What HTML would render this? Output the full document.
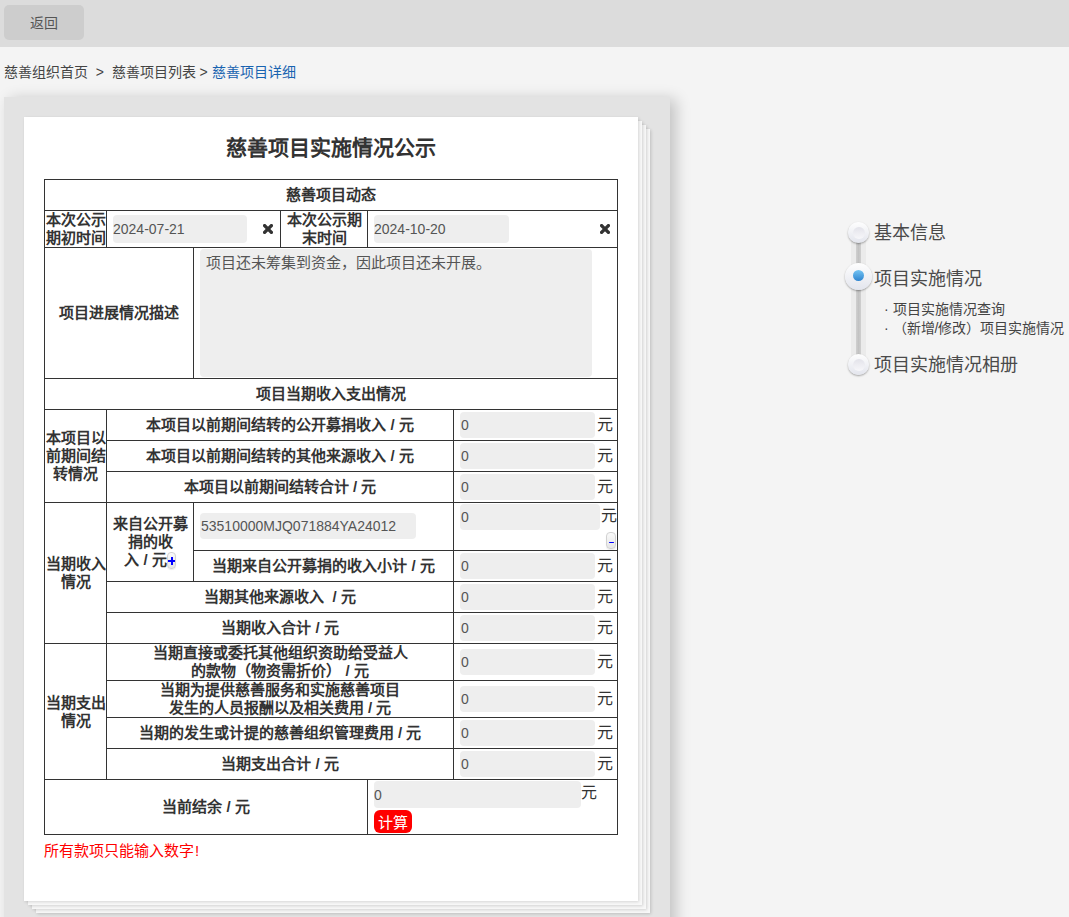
<!DOCTYPE html>
<html lang="zh-CN"><head><meta charset="utf-8">
<style>
html,body{margin:0;padding:0;}
body{width:1069px;height:917px;overflow:hidden;background:#f4f4f4;position:relative;font-family:"Liberation Sans",sans-serif;color:#333;}
.a{position:absolute;}
#topbar{left:0;top:0;width:1069px;height:47px;background:#dcdcdc;}
#back{left:4px;top:5px;width:80px;height:35px;background:#cdcdcd;border-radius:5px;font-size:14px;color:#555;line-height:37px;text-align:center;}
#crumb{left:4px;top:62px;font-size:14px;line-height:20px;color:#444;white-space:nowrap;}
#crumb .cur{color:#1863b0;}
#box{left:4px;top:97px;width:666px;height:840px;background:#e3e3e3;box-shadow:6px 2px 14px rgba(0,0,0,0.2);}
.sheet{width:614px;height:784px;background:#f8f8f8;box-shadow:1px 1px 3px rgba(0,0,0,0.16);}
#paper{left:24px;top:117px;width:614px;height:784px;background:#fff;box-shadow:1px 1px 3px rgba(0,0,0,0.14);}
#title{left:24px;top:134px;width:614px;text-align:center;font-size:21px;font-weight:bold;line-height:28px;color:#333;}
.h{position:absolute;height:1px;background:#333;}
.v{position:absolute;width:1px;background:#333;}
.c{position:absolute;display:flex;align-items:center;justify-content:center;text-align:center;font-size:15px;font-weight:bold;line-height:18px;color:#333;}
.inp{position:absolute;background:#eee;border-radius:4px;font-size:14px;color:#555;line-height:26px;padding-left:1px;box-sizing:border-box;}
.yuan{position:absolute;font-size:16px;line-height:18px;color:#333;}
.x{position:absolute;width:10px;height:10px;}
.sbtn{background:linear-gradient(#fafafa,#e6e6e6);border:1px solid #d2d2d2;border-radius:4px;box-sizing:border-box;box-shadow:0 1px 1px rgba(0,0,0,0.08);}
.plh{position:absolute;left:0.5px;top:7px;width:7px;height:2px;background:#00f;}
.plv{position:absolute;left:3px;top:4px;width:2px;height:8px;background:#00f;}
.dot{border-radius:50%;background:linear-gradient(#fefefe,#e3e5ed);box-shadow:0 1px 2px rgba(0,0,0,0.35);}
.dot i,.dot b{position:absolute;border-radius:50%;}
.dot i{background:linear-gradient(#e3e3ea,#f7f7fa);}
.dot b{background:linear-gradient(#74c4f3,#2e84d0);}
.nav{font-size:18px;line-height:24px;color:#4a4a4a;white-space:nowrap;}
.sub{font-size:14px;line-height:18px;color:#444;white-space:nowrap;}
#note{left:44px;top:841px;font-size:15px;line-height:20px;color:#f00;white-space:nowrap;}
</style></head><body>
<div id="topbar" class="a"></div>
<div id="back" class="a">返回</div>
<div id="crumb" class="a">慈善组织首页 &nbsp;&gt;&nbsp; 慈善项目列表 &gt; <span class="cur">慈善项目详细</span></div>

<div id="box" class="a"></div>
<div class="a sheet" style="left:36px;top:129px"></div>
<div class="a sheet" style="left:32px;top:125px"></div>
<div class="a sheet" style="left:28px;top:121px"></div>
<div id="paper" class="a"></div>
<div id="title" class="a">慈善项目实施情况公示</div>

<!-- horizontal lines -->
<div class="h" style="left:44px;top:179px;width:574px"></div>
<div class="h" style="left:44px;top:210px;width:574px"></div>
<div class="h" style="left:44px;top:247px;width:574px"></div>
<div class="h" style="left:44px;top:378px;width:574px"></div>
<div class="h" style="left:44px;top:409px;width:574px"></div>
<div class="h" style="left:106px;top:440px;width:512px"></div>
<div class="h" style="left:106px;top:471px;width:512px"></div>
<div class="h" style="left:44px;top:502px;width:574px"></div>
<div class="h" style="left:193px;top:550px;width:425px"></div>
<div class="h" style="left:106px;top:581px;width:512px"></div>
<div class="h" style="left:106px;top:612px;width:512px"></div>
<div class="h" style="left:44px;top:643px;width:574px"></div>
<div class="h" style="left:106px;top:680px;width:512px"></div>
<div class="h" style="left:106px;top:717px;width:512px"></div>
<div class="h" style="left:106px;top:748px;width:512px"></div>
<div class="h" style="left:44px;top:779px;width:574px"></div>
<div class="h" style="left:44px;top:834px;width:574px"></div>
<!-- vertical lines -->
<div class="v" style="left:44px;top:179px;height:656px"></div>
<div class="v" style="left:617px;top:179px;height:656px"></div>
<div class="v" style="left:106px;top:210px;height:37px"></div>
<div class="v" style="left:280px;top:210px;height:37px"></div>
<div class="v" style="left:367px;top:210px;height:37px"></div>
<div class="v" style="left:193px;top:247px;height:131px"></div>
<div class="v" style="left:106px;top:409px;height:370px"></div>
<div class="v" style="left:453px;top:409px;height:370px"></div>
<div class="v" style="left:193px;top:502px;height:79px"></div>
<div class="v" style="left:367px;top:779px;height:55px"></div>

<!-- cells -->
<div class="c" style="left:45px;top:180px;width:572px;height:30px">慈善项目动态</div>
<div class="c" style="left:45px;top:211px;width:61px;height:36px">本次公示<br>期初时间</div>
<div class="inp" style="left:113px;top:215px;width:134px;height:28px;line-height:28px;padding-left:0">2024-07-21</div>
<svg class="x" style="left:263px;top:224px" viewBox="0 0 10 10"><path d="M1.6 1.6L8.4 8.4M8.4 1.6L1.6 8.4" stroke="#333" stroke-width="3.4" stroke-linecap="round"/></svg>
<div class="c" style="left:281px;top:211px;width:86px;height:36px">本次公示期<br>末时间</div>
<div class="inp" style="left:374px;top:215px;width:135px;height:28px;line-height:28px;padding-left:0">2024-10-20</div>
<svg class="x" style="left:600px;top:224px" viewBox="0 0 10 10"><path d="M1.6 1.6L8.4 8.4M8.4 1.6L1.6 8.4" stroke="#333" stroke-width="3.4" stroke-linecap="round"/></svg>

<div class="c" style="left:45px;top:248px;width:148px;height:130px">项目进展情况描述</div>
<div class="inp" style="left:200px;top:249px;width:392px;height:128px;font-size:15px;line-height:28px;color:#555;text-indent:5px">项目还未筹集到资金，因此项目还未开展。</div>

<div class="c" style="left:45px;top:379px;width:572px;height:30px">项目当期收入支出情况</div>

<div class="c" style="left:45px;top:410px;width:61px;height:92px">本项目以<br>前期间结<br>转情况</div>
<div class="c" style="left:107px;top:410px;width:346px;height:30px">本项目以前期间结转的公开募捐收入 / 元</div>
<div class="c" style="left:107px;top:441px;width:346px;height:30px">本项目以前期间结转的其他来源收入 / 元</div>
<div class="c" style="left:107px;top:472px;width:346px;height:30px">本项目以前期间结转合计 / 元</div>
<div class="inp" style="left:460px;top:412px;width:135px;height:26px">0</div>
<div class="inp" style="left:460px;top:443px;width:135px;height:26px">0</div>
<div class="inp" style="left:460px;top:474px;width:135px;height:26px">0</div>
<div class="yuan" style="left:597px;top:416px">元</div>
<div class="yuan" style="left:597px;top:447px">元</div>
<div class="yuan" style="left:597px;top:478px">元</div>

<div class="c" style="left:45px;top:503px;width:61px;height:140px">当期收入<br>情况</div>
<div class="c" style="left:107px;top:503px;width:86px;height:78px;align-items:flex-start;padding-top:12px;box-sizing:border-box"><div>来自公开募<br>捐的收<br>入 / 元<span class="sbtn" style="display:inline-block;position:relative;width:9px;height:17px;vertical-align:top;margin-top:1px"><i class="plh"></i><i class="plv"></i></span></div></div>
<div class="inp" style="left:200px;top:513px;width:216px;height:26px">53510000MJQ071884YA24012</div>
<div class="inp" style="left:460px;top:504px;width:140px;height:26px">0</div>
<div class="yuan" style="left:601px;top:507px">元</div>
<div class="c" style="left:194px;top:551px;width:259px;height:30px">当期来自公开募捐的收入小计 / 元</div>
<div class="inp" style="left:460px;top:553px;width:135px;height:26px">0</div>
<div class="yuan" style="left:597px;top:557px">元</div>
<div class="c" style="left:107px;top:582px;width:346px;height:30px">当期其他来源收入 &nbsp;/ 元</div>
<div class="inp" style="left:460px;top:584px;width:135px;height:26px">0</div>
<div class="yuan" style="left:597px;top:588px">元</div>
<div class="c" style="left:107px;top:613px;width:346px;height:30px">当期收入合计 / 元</div>
<div class="inp" style="left:460px;top:615px;width:135px;height:26px">0</div>
<div class="yuan" style="left:597px;top:619px">元</div>

<div class="c" style="left:45px;top:644px;width:61px;height:135px">当期支出<br>情况</div>
<div class="c" style="left:107px;top:644px;width:346px;height:36px">当期直接或委托其他组织资助给受益人<br>的款物（物资需折价） / 元</div>
<div class="c" style="left:107px;top:681px;width:346px;height:36px">当期为提供慈善服务和实施慈善项目<br>发生的人员报酬以及相关费用 / 元</div>
<div class="c" style="left:107px;top:718px;width:346px;height:30px">当期的发生或计提的慈善组织管理费用 / 元</div>
<div class="c" style="left:107px;top:749px;width:346px;height:30px">当期支出合计 / 元</div>
<div class="inp" style="left:460px;top:649px;width:135px;height:26px">0</div>
<div class="inp" style="left:460px;top:686px;width:135px;height:26px">0</div>
<div class="inp" style="left:460px;top:720px;width:135px;height:26px">0</div>
<div class="inp" style="left:460px;top:751px;width:135px;height:26px">0</div>
<div class="yuan" style="left:597px;top:653px">元</div>
<div class="yuan" style="left:597px;top:690px">元</div>
<div class="yuan" style="left:597px;top:724px">元</div>
<div class="yuan" style="left:597px;top:755px">元</div>

<div class="c" style="left:45px;top:780px;width:322px;height:54px">当前结余 / 元</div>
<div class="inp" style="left:374px;top:781px;width:207px;height:27px;line-height:29px;padding-left:0">0</div>
<div class="yuan" style="left:581px;top:784px">元</div>
<div class="a" style="left:374px;top:810px;width:38px;height:23px;background:#f00;border-radius:6px;color:#fff;font-size:15px;line-height:26px;text-align:center">计算</div>

<div id="note" class="a">所有款项只能输入数字<span style="margin-left:1px">!</span></div>

<!-- small +/- buttons -->
<div class="a sbtn" style="left:606px;top:532px;width:10px;height:17px"><i style="position:absolute;left:2px;top:8.7px;width:5px;height:1.6px;background:#00f;border-radius:1px"></i></div>

<!-- right nav -->
<div class="a" style="left:851px;top:240px;width:15px;height:120px;background:#ebebeb"></div>
<div class="a" style="left:856px;top:240px;width:5px;height:120px;background:linear-gradient(to right,#d0d0d0,#c2c2c2,#d0d0d0)"></div>
<div class="a dot" style="left:848px;top:222px;width:21px;height:21px"><i style="left:4.5px;top:4.5px;width:12px;height:12px"></i></div>
<div class="a dot" style="left:845px;top:263px;width:27px;height:27px"><b style="left:8px;top:7px;width:11px;height:11px"></b></div>
<div class="a dot" style="left:848px;top:354px;width:21px;height:21px"><i style="left:4.5px;top:4.5px;width:12px;height:12px"></i></div>
<div class="a nav" style="left:874px;top:221px">基本信息</div>
<div class="a nav" style="left:874px;top:267px">项目实施情况</div>
<div class="a nav" style="left:874px;top:353px">项目实施情况相册</div>
<div class="a sub" style="left:884px;top:300px">· 项目实施情况查询</div>
<div class="a sub" style="left:884px;top:319px">· （新增/修改）项目实施情况</div>

</body></html>
